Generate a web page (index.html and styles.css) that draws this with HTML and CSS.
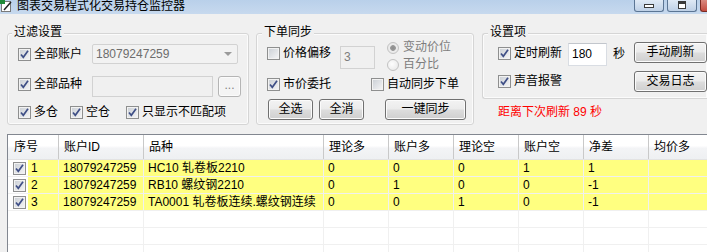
FILE: index.html
```html
<!DOCTYPE html>
<html lang="zh-CN">
<head>
<meta charset="utf-8">
<title>图表交易程式化交易持仓监控器</title>
<link rel="stylesheet" href="styles.css">
</head>
<body>
<div class="titlebar">
  <span class="appicon"><svg width="12" height="12" viewBox="0 0 12 12"><rect x="1.5" y="1.5" width="9" height="10" fill="#fff" stroke="#7a7a7a"/><rect x="0" y="0" width="5" height="4" fill="#1f8a3a"/><path d="M4 10 L11 2" stroke="#222" stroke-width="1.5"/></svg></span>
  <span class="title">图表交易程式化交易持仓监控器</span>
  <span class="winbtns">
    <span class="wbtn"><i class="g-min"></i></span>
    <span class="wbtn"><i class="g-max"></i></span>
    <span class="wbtn close"></span>
  </span>
</div>

<div class="top">
  <div class="group g1">
    <div class="gtitle">过滤设置</div>
    <div class="row g1r1">
      <label class="chk w74"><span class="cb"><svg width="11" height="11" viewBox="0 0 11 11"><path d="M2 5.5 L4.3 8.3 L9 1.8" fill="none" stroke="#3f4f86" stroke-width="1.7"/></svg></span>全部账户</label>
      <div class="combo"><span>18079247259</span><span class="arr"></span></div>
    </div>
    <div class="row g1r2">
      <label class="chk w74 nudge"><span class="cb"><svg width="11" height="11" viewBox="0 0 11 11"><path d="M2 5.5 L4.3 8.3 L9 1.8" fill="none" stroke="#3f4f86" stroke-width="1.7"/></svg></span>全部品种</label>
      <div class="tbox dis w121"></div>
      <div class="btn dis dots">...</div>
    </div>
    <div class="row g1r3">
      <label class="chk w52"><span class="cb"><svg width="11" height="11" viewBox="0 0 11 11"><path d="M2 5.5 L4.3 8.3 L9 1.8" fill="none" stroke="#3f4f86" stroke-width="1.7"/></svg></span>多仓</label>
      <label class="chk w56"><span class="cb"><svg width="11" height="11" viewBox="0 0 11 11"><path d="M2 5.5 L4.3 8.3 L9 1.8" fill="none" stroke="#3f4f86" stroke-width="1.7"/></svg></span>空仓</label>
      <label class="chk"><span class="cb"><svg width="11" height="11" viewBox="0 0 11 11"><path d="M2 5.5 L4.3 8.3 L9 1.8" fill="none" stroke="#3f4f86" stroke-width="1.7"/></svg></span>只显示不匹配项</label>
    </div>
  </div>

  <div class="group g2">
    <div class="gtitle">下单同步</div>
    <div class="row g2ra">
      <label class="chk w73 m6"><span class="cb"></span>价格偏移</label>
      <div class="tbox dis w35 m5">3</div>
      <div class="radios">
        <div class="rdl"><span class="rd on"></span>变动价位</div>
        <div class="rdl"><span class="rd"></span>百分比</div>
      </div>
    </div>
    <div class="row g2rb">
      <label class="chk w104"><span class="cb"><svg width="11" height="11" viewBox="0 0 11 11"><path d="M2 5.5 L4.3 8.3 L9 1.8" fill="none" stroke="#3f4f86" stroke-width="1.7"/></svg></span>市价委托</label>
      <label class="chk"><span class="cb"></span>自动同步下单</label>
    </div>
    <div class="row g2rc">
      <div class="btn w45">全选</div>
      <div class="btn w45 ml6">全消</div>
      <div class="btn w81 ml21">一键同步</div>
    </div>
  </div>

  <div class="col3">
    <div class="group g3">
      <div class="gtitle">设置项</div>
      <div class="row g3ra">
        <label class="chk w70 m5"><span class="cb"><svg width="11" height="11" viewBox="0 0 11 11"><path d="M2 5.5 L4.3 8.3 L9 1.8" fill="none" stroke="#3f4f86" stroke-width="1.7"/></svg></span>定时刷新</label>
        <div class="tbox w39 m1">180</div>
        <span class="sec">秒</span>
        <div class="btn w73 ml9">手动刷新</div>
      </div>
      <div class="row g3rb">
        <label class="chk w136 m4"><span class="cb"><svg width="11" height="11" viewBox="0 0 11 11"><path d="M2 5.5 L4.3 8.3 L9 1.8" fill="none" stroke="#3f4f86" stroke-width="1.7"/></svg></span>声音报警</label>
        <div class="btn w73">交易日志</div>
      </div>
    </div>
    <div class="countdown">距离下次刷新 89 秒</div>
  </div>
</div>

<div class="list">
  <div class="lrow head">
    <div class="h first">序号</div><div class="h">账户ID</div><div class="h">品种</div><div class="h">理论多</div><div class="h">账户多</div><div class="h">理论空</div><div class="h">账户空</div><div class="h">净差</div><div class="h">均价多</div>
  </div>
  <div class="lrow data">
    <div class="c c0"><span class="cb"><svg width="11" height="11" viewBox="0 0 11 11"><path d="M2 5.5 L4.3 8.3 L9 1.8" fill="none" stroke="#3f4f86" stroke-width="1.7"/></svg></span><span class="idx">1</span></div>
    <div class="c">18079247259</div><div class="c">HC10 轧卷板2210</div><div class="c">0</div><div class="c">0</div><div class="c">0</div><div class="c">1</div><div class="c">1</div><div class="c"></div>
  </div>
  <div class="lrow data">
    <div class="c c0"><span class="cb"><svg width="11" height="11" viewBox="0 0 11 11"><path d="M2 5.5 L4.3 8.3 L9 1.8" fill="none" stroke="#3f4f86" stroke-width="1.7"/></svg></span><span class="idx">2</span></div>
    <div class="c">18079247259</div><div class="c">RB10 螺纹钢2210</div><div class="c">0</div><div class="c">1</div><div class="c">0</div><div class="c">0</div><div class="c">-1</div><div class="c"></div>
  </div>
  <div class="lrow data">
    <div class="c c0"><span class="cb"><svg width="11" height="11" viewBox="0 0 11 11"><path d="M2 5.5 L4.3 8.3 L9 1.8" fill="none" stroke="#3f4f86" stroke-width="1.7"/></svg></span><span class="idx">3</span></div>
    <div class="c">18079247259</div><div class="c">TA0001 轧卷板连续.螺纹钢连续</div><div class="c">0</div><div class="c">0</div><div class="c">1</div><div class="c">0</div><div class="c">-1</div><div class="c"></div>
  </div>
  <div class="lrow empty"><div></div><div></div><div></div><div></div><div></div><div></div><div></div><div></div><div></div></div>
  <div class="lrow empty"><div></div><div></div><div></div><div></div><div></div><div></div><div></div><div></div><div></div></div>
  <div class="lrow empty"><div></div><div></div><div></div><div></div><div></div><div></div><div></div><div></div><div></div></div>
</div>
</body>
</html>
```

FILE: styles.css
```css
* { box-sizing: border-box; }
body {
  margin: 0;
  width: 707px;
  height: 252px;
  overflow: hidden;
  background: #f0f0f0;
  font-family: "Liberation Sans", "Noto Sans CJK SC", sans-serif;
  font-size: 12px;
  line-height: 13px;
  color: #000;
}

/* title bar */
.titlebar {
  height: 14px;
  display: flex;
  align-items: flex-start;
  background: linear-gradient(#b9d0ea, #c7d9ee);
}
.appicon { width: 12px; height: 12px; margin-right: 5px; display: block; }
.appicon svg { display: block; }
.title { margin-top: 0; white-space: nowrap; }
.winbtns { margin-left: auto; display: flex; gap: 3px; }
.wbtn {
  width: 30px;
  height: 12px;
  border: 1px solid #5b7594;
  border-top: none;
  border-radius: 0 0 3px 3px;
  background: linear-gradient(#dfe9f5, #bed0e6);
  display: flex;
  justify-content: center;
}
.wbtn.close { width: 7px; border-right: none; border-radius: 0 0 0 3px; background: linear-gradient(#d98a80, #c44c40); border-color: #7a2a22; }
.g-min { display: block; width: 10px; height: 4px; margin-top: 4px; border: 1px solid #3a3a3a; background: #fff; }
.g-max { display: block; width: 8px; height: 8px; margin-top: 1px; border: 1px solid #3a3a3a; border-top-width: 3px; background: #fff; }

/* top area */
.top {
  display: flex;
  align-items: flex-start;
  padding: 19px 0 0 7px;
  gap: 7px;
}
.group {
  border: 1px solid #d5d5d5;
  border-radius: 3px;
  box-shadow: inset 0 0 0 1px #fbfbfb;
}
.gtitle {
  width: fit-content;
  margin: -8px 0 0 5px;
  padding: 0 2px;
  background: #f0f0f0;
  white-space: nowrap;
}
.g1 .gtitle { margin-left: 4px; }
.row { display: flex; align-items: center; }

.chk { display: inline-flex; align-items: center; gap: 3px; white-space: nowrap; height: 13px; flex: none; }
.cb {
  width: 13px;
  height: 13px;
  flex: none;
  border: 1px solid #8e8f8f;
  background: linear-gradient(135deg, #c9ced4, #f6f6f7);
  box-shadow: inset 0 0 0 1px #f2f2f2;
  display: inline-flex;
  align-items: center;
  justify-content: center;
}
.cb svg { display: block; }

.w35 { width: 35px; }
.w39 { width: 39px; }
.w45 { width: 45px; }
.w52 { width: 52px; }
.w56 { width: 56px; }
.w70 { width: 70px; }
.w73 { width: 73px; }
.w74 { width: 74px; }
.w81 { width: 81px; }
.w104 { width: 104px; }
.w121 { width: 121px; }
.w136 { width: 136px; }
.ml6 { margin-left: 6px; }
.ml9 { margin-left: 9px; }
.ml21 { margin-left: 21px; }
.m1 { margin-top: 1px; }
.m4 { margin-top: 4px; }
.m5 { margin-top: 5px; }
.m6 { margin-top: 6px; }

.combo {
  width: 146px;
  height: 20px;
  border: 1px solid #d2d2d2;
  border-radius: 2px;
  background: #f2f2f2;
  color: #6d6d6d;
  display: flex;
  align-items: center;
  justify-content: space-between;
  padding: 0 5px 0 3px;
}
.arr {
  width: 0;
  height: 0;
  border-left: 4px solid transparent;
  border-right: 4px solid transparent;
  border-top: 4px solid #9a9a9a;
}
.tbox {
  height: 23px;
  border: 1px solid #d9dde3;
  border-top-color: #c2c6cc;
  background: #fff;
  padding: 0 3px;
  line-height: 21px;
  flex: none;
}
.tbox.dis { background: #f0f0f0; color: #7d7d7d; border-color: #d2d2d2; }
.g1 .tbox { height: 21px; line-height: 19px; }

.btn {
  height: 21px;
  border: 1px solid #707070;
  border-radius: 3px;
  background: linear-gradient(#f3f3f3 0%, #ebebeb 48%, #dddddd 52%, #cfcfcf 100%);
  box-shadow: inset 0 0 0 1px #fbfbfb;
  text-align: center;
  line-height: 19px;
  flex: none;
  white-space: nowrap;
}
.btn.dis { border-color: #b5b5b5; background: #f4f4f4; color: #838383; }
.dots { width: 23px; margin-left: 5px; line-height: 17px; }

/* group 1 */
.g1 { width: 242px; height: 92px; }
.g1r1 { margin-top: 5px; height: 20px; padding-left: 10px; }
.g1r2 { margin-top: 12px; height: 21px; padding-left: 10px; align-items: flex-start; }
.g1r2 .nudge { margin-top: 2px; }
.g1r3 { margin-top: 9px; height: 13px; padding-left: 10px; }

/* group 2 */
.g2 { width: 218px; height: 92px; }
.g2ra { margin-top: 2px; height: 30px; padding-left: 10px; align-items: flex-start; }
.radios { margin-left: 12px; display: flex; flex-direction: column; gap: 4px; color: #7d7d7d; }
.rdl { display: flex; align-items: center; gap: 4px; height: 13px; white-space: nowrap; }
.rd {
  width: 12px;
  height: 12px;
  border-radius: 50%;
  border: 1px solid #c2c2c2;
  background: radial-gradient(circle at 40% 40%, #fdfdfd, #e6e6e6);
  flex: none;
}
.rd.on { background: radial-gradient(circle, #8c8c8c 0, #9a9a9a 2.5px, #ececec 3.2px, #e6e6e6 100%); }
.g2rb { margin-top: 7px; height: 13px; padding-left: 10px; }
.g2rc { margin-top: 8px; height: 21px; padding-left: 11px; }

/* group 3 */
.col3 { margin-left: 1px; }
.g3 { width: 225px; height: 66px; border-right: none; border-radius: 3px 0 0 3px; }
.g3ra { margin-top: 3px; height: 24px; padding-left: 15px; align-items: flex-start; }
.sec { margin: 6px 0 0 6px; width: 12px; }
.g3rb { margin-top: 5px; height: 21px; padding-left: 15px; align-items: flex-start; }
.countdown { margin: 7px 0 0 16px; color: #ff0000; white-space: nowrap; }

/* list view */
.list {
  margin: 9px 0 0 7px;
  width: 700px;
  overflow: hidden;
  border-left: 1px solid #828790;
  border-top: 1px solid #828790;
  background: #fff;
}
.lrow {
  display: grid;
  grid-template-columns: 51px 85px 180px 65px 65px 65px 65px 65px 58px;
}
.head { height: 25px; border-bottom: 1px solid #e3e3e3; }
.h {
  background: linear-gradient(#ffffff 0%, #ffffff 45%, #f3f4f6 55%, #eef0f2 100%);
  border-right: 1px solid #c9c9c9;
  padding-left: 5px;
  line-height: 24px;
  white-space: nowrap;
}
.h.first { padding-left: 6px; }
.h:last-child { border-right: none; }
.data > div, .empty > div {
  height: 17px;
  border-right: 1px solid #f0f0f0;
  border-bottom: 1px solid #f0f0f0;
}
.data > div:last-child, .empty > div:last-child { border-right: none; }
.c {
  background: #ffff80;
  padding-left: 4px;
  line-height: 16px;
  white-space: nowrap;
  overflow: hidden;
}
.c0 {
  display: flex;
  align-items: center;
  padding-left: 5px;
  background: linear-gradient(to right, #ffffff 20px, #ffff80 20px);
}
.idx { margin-left: 5px; }
```
